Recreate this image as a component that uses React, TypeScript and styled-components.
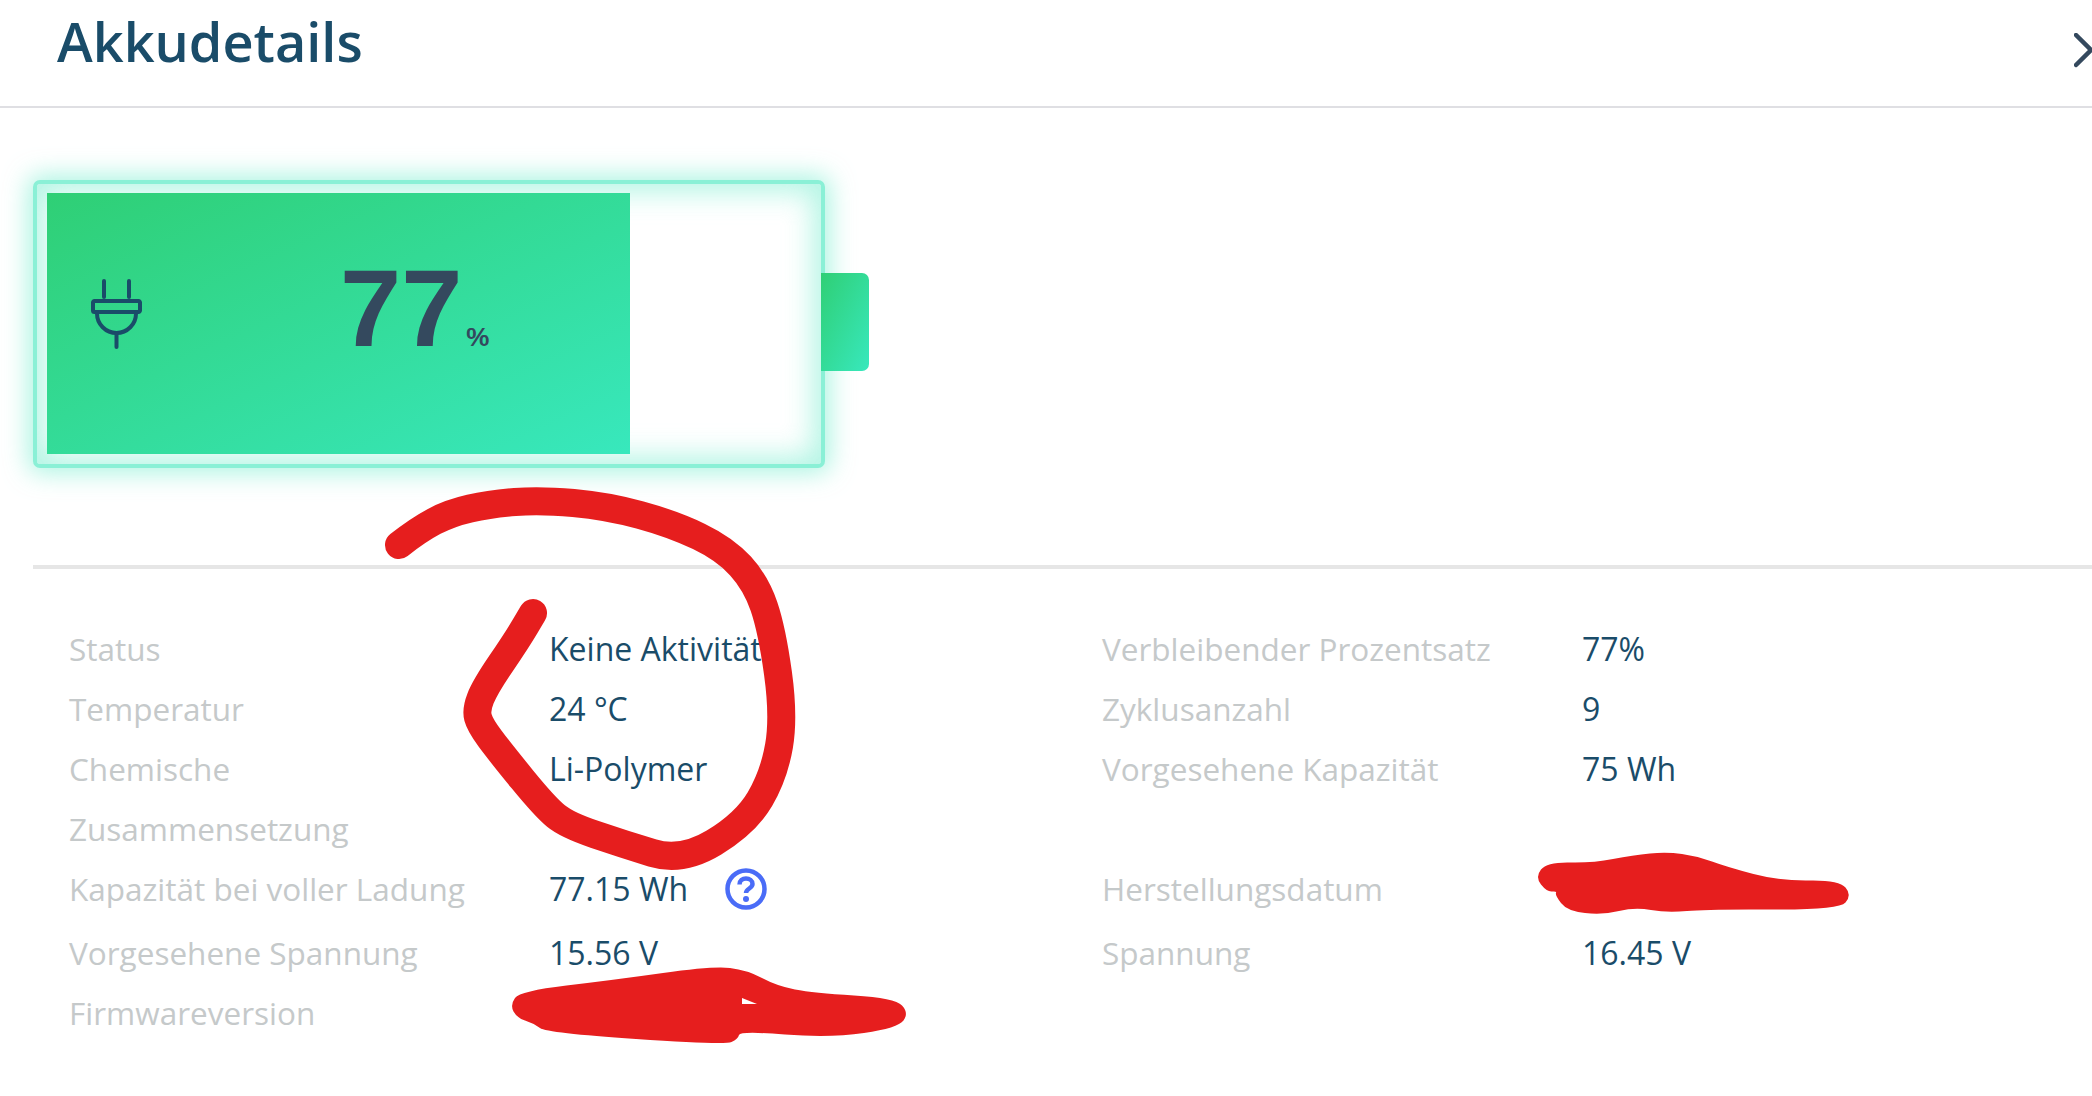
import styled, { createGlobalStyle } from 'styled-components';

type Point = [number, number];

const details: { label: string; value?: string; help?: boolean; tall?: boolean; sideLabel?: string; sideValue?: string }[] = [
  { label: 'Status', value: 'Keine Aktivität', sideLabel: 'Verbleibender Prozentsatz', sideValue: '77%' },
  { label: 'Temperatur', value: '24 °C', sideLabel: 'Zyklusanzahl', sideValue: '9' },
  { label: 'Chemische Zusammensetzung', value: 'Li-Polymer', sideLabel: 'Vorgesehene Kapazität', sideValue: '75 Wh' },
  { label: 'Kapazität bei voller Ladung', value: '77.15 Wh', help: true, tall: true, sideLabel: 'Herstellungsdatum' },
  { label: 'Vorgesehene Spannung', value: '15.56 V', sideLabel: 'Spannung', sideValue: '16.45 V' },
  { label: 'Firmwareversion' },
];

const circleStroke: Point[] = [
  [399, 545], [418, 530], [450, 513], [490, 504], [540, 500], [607, 506], [673, 524], [725, 549], [756, 583],
  [772, 630], [784, 717], [774, 775], [746, 823], [682, 862], [623, 844], [567, 825], [545, 807],
  [500, 752], [480, 725], [476, 710], [485, 687], [517, 640], [533, 613],
];

const firmwareBlot: Point[] = [
  [520, 991], [613, 980], [713, 966], [747, 970], [777, 986], [813, 993], [895, 998], [909, 1013],
  [898, 1028], [830, 1038], [740, 1031], [738, 1039], [725, 1045], [547, 1033], [533, 1023],
  [517, 1018], [510, 1005],
];

const dateBlot: Point[] = [
  [1547, 862], [1593, 863], [1633, 855], [1667, 852], [1697, 856], [1727, 867], [1780, 881], [1839, 880],
  [1852, 895], [1839, 910], [1707, 909], [1667, 913], [1635, 907], [1603, 915], [1567, 911], [1555, 895],
  [1557, 891], [1547, 892], [1535, 877],
];

// rounds a list of points off through the midpoints between them
const smoothPath = (points: Point[], closed = false) => {
  const mid = (a: Point, b: Point): Point => [(a[0] + b[0]) / 2, (a[1] + b[1]) / 2];
  if (closed) {
    const start = mid(points[points.length - 1], points[0]);
    const curves = points.map((p, i) => {
      const end = mid(p, points[(i + 1) % points.length]);
      return `Q${p[0]} ${p[1]} ${end[0]} ${end[1]}`;
    });
    return `M${start[0]} ${start[1]} ${curves.join(' ')} Z`;
  }
  const curves = points.slice(1, -1).map((p, i) => {
    const end = mid(p, points[i + 2]);
    return `Q${p[0]} ${p[1]} ${end[0]} ${end[1]}`;
  });
  const last = points[points.length - 1];
  return `M${points[0][0]} ${points[0][1]} ${curves.join(' ')} L${last[0]} ${last[1]}`;
};

const App = () => {
  return (
    <>
      <GlobalStyle />
      <Page>
        <Header>
          <Title>Akkudetails</Title>
          <Chevron viewBox="0 0 18 36">
            <polyline points="2,2 17,17 2,32" />
          </Chevron>
        </Header>
        <BatterySection>
          <Shell>
            <Charge>
              <PlugIcon viewBox="0 0 56 72">
                <path d="M14 3V19M39 3V19" />
                <path d="M4.500 23H48.500a1.500 1.500 0 0 1 1.500 1.500V32.500a1.500 1.500 0 0 1-1.500 1.500H4.500a1.500 1.500 0 0 1-1.500-1.500V24.500a1.500 1.500 0 0 1 1.500-1.500Z" />
                <path d="M7 34V35.500A19.500 19.500 0 0 0 46 35.500V34" />
                <path d="M26.500 55V69" />
              </PlugIcon>
              <Level>
                <LevelNumber>77</LevelNumber>
                <LevelUnit>%</LevelUnit>
              </Level>
            </Charge>
          </Shell>
          <Terminal />
        </BatterySection>
        <Divider />
        <DetailGrid>
          {details.map((row) => (
            <DetailRow key={row.label} $tall={row.tall}>
              <Label>{row.label}</Label>
              <Value>
                {row.value}
                {row.help && (
                  <HelpIcon viewBox="0 0 42 42">
                    <circle cx="21" cy="21" r="18.500" />
                    <path d="M14.500 16.500C14.500 12.500 17.500 10.500 21 10.500S27.500 12.500 27.500 16C27.500 20.500 21 20.500 21 25" />
                    <circle className="dot" cx="21" cy="31" r="3" />
                  </HelpIcon>
                )}
              </Value>
              {row.sideLabel ? <Label>{row.sideLabel}</Label> : <span />}
              <Value>{row.sideValue}</Value>
            </DetailRow>
          ))}
        </DetailGrid>
        <Scribbles viewBox="0 0 2092 1096">
          <ScribbleLine d={smoothPath(circleStroke)} />
          <ScribbleFill d={smoothPath(firmwareBlot, true) + ' M742 998L757 1004L742 1004Z'} fillRule="evenodd" />
          <ScribbleFill d={smoothPath(dateBlot, true)} />
        </Scribbles>
      </Page>
    </>
  );
};

export default App;

const GlobalStyle = createGlobalStyle`
  html, body {
    margin: 0;
    padding: 0;
    background: #fff;
    overflow: hidden;
  }
  * {
    box-sizing: border-box;
  }
`;

const Page = styled.div`
  position: relative;
  width: 2092px;
  height: 1096px;
  overflow: hidden;
  font-family: 'Open Sans', 'Noto Sans', sans-serif;
  background: #fff;
`;

const Header = styled.header`
  height: 108px;
  padding-left: 57px;
  border-bottom: 2px solid #dfdfe3;
  display: flex;
  align-items: flex-start;
  justify-content: space-between;
`;

const Title = styled.h1`
  margin: 0;
  font-size: 54px;
  line-height: 82px;
  font-weight: 600;
  color: #1a4c69;
`;

const Chevron = styled.svg`
  width: 18px;
  height: 36px;
  margin-top: 33px;
  fill: none;
  stroke: #34495e;
  stroke-width: 4.500;
  stroke-linecap: round;
  stroke-linejoin: round;
`;

const BatterySection = styled.section`
  padding: 72px 0 0 33px;
  display: flex;
  align-items: center;
`;

const Shell = styled.div`
  width: 792px;
  height: 288px;
  padding: 9px 10px 10px;
  border: 4px solid #8af0d6;
  border-radius: 7px;
  background: #fff;
  box-shadow: 0 0 24px 5px rgba(138, 240, 214, 0.7), inset 0 0 28px 8px rgba(138, 240, 214, 0.65);
`;

const Charge = styled.div`
  width: 583px;
  height: 100%;
  padding-left: 43px;
  display: flex;
  background: linear-gradient(to bottom right, #2fcf75, #38e8bd);
`;

const PlugIcon = styled.svg`
  width: 56px;
  height: 72px;
  margin-top: 85px;
  flex: none;
  fill: none;
  stroke: #1a4c69;
  stroke-width: 4;
  stroke-linecap: round;
`;

const Level = styled.div`
  margin: 52px 0 0 194px;
  display: flex;
  align-items: baseline;
  height: 126px;
  color: #34495e;
  font-family: 'Liberation Sans', Arial, sans-serif;
  font-weight: 700;
`;

const LevelNumber = styled.span`
  font-size: 110px;
  line-height: 126px;
`;

const LevelUnit = styled.span`
  margin-left: 4px;
  font-size: 26px;
`;

const Terminal = styled.div`
  width: 48px;
  height: 98px;
  margin: 0 0 4px -4px;
  border-radius: 0 7px 7px 0;
  background: linear-gradient(to bottom right, #2fcf75, #38e8bd);
`;

const Divider = styled.hr`
  height: 4px;
  margin: 97px 0 0 33px;
  border: 0;
  background: #e6e6e6;
`;

const DetailGrid = styled.div`
  padding: 50px 0 0 69px;
`;

const DetailRow = styled.div<{ $tall?: boolean }>`
  display: grid;
  grid-template-columns: 480px 553px 480px 1fr;
  padding-bottom: ${(p) => (p.$tall ? '4px' : '0')};
`;

const Label = styled.span`
  max-width: 420px;
  font-size: 31.500px;
  line-height: 60px;
  color: #c5c9ca;
`;

const Value = styled.span`
  display: flex;
  align-items: center;
  align-self: start;
  height: 60px;
  font-size: 32px;
  line-height: 60px;
  color: #1a4c69;
`;

const HelpIcon = styled.svg`
  width: 42px;
  height: 42px;
  margin-left: 37px;
  fill: none;
  stroke: #4a6cf7;
  stroke-width: 4.500;

  .dot {
    fill: #4a6cf7;
    stroke: none;
  }
`;

const Scribbles = styled.svg`
  position: absolute;
  top: 0;
  left: 0;
  width: 2092px;
  height: 1096px;
  pointer-events: none;
`;

const ScribbleLine = styled.path`
  fill: none;
  stroke: #e61e1e;
  stroke-width: 28;
  stroke-linecap: round;
  stroke-linejoin: round;
`;

const ScribbleFill = styled.path`
  fill: #e61e1e;
`;
